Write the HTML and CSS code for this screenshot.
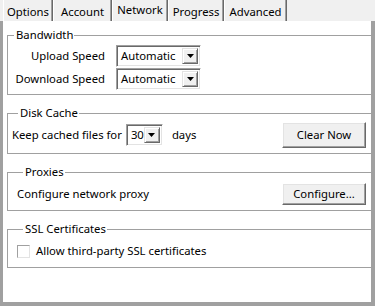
FILE: index.html
```html
<!DOCTYPE html>
<html>
<head>
<meta charset="utf-8">
<link rel="stylesheet" href="styles.css">
</head>
<body>
<div class="window">
  <div class="tabs">
    <div class="tab tab-options">Options</div>
    <div class="tab tab-account">Account</div>
    <div class="tab tab-network active">Network</div>
    <div class="tab tab-progress">Progress</div>
    <div class="tab tab-advanced">Advanced</div>
  </div>
  <div class="panel">
    <fieldset class="group bandwidth">
      <legend>Bandwidth</legend>
      <div class="speed-grid">
        <label class="speed-label">Upload Speed</label>
        <div class="combo combo-wide"><span class="combo-value">Automatic</span><span class="combo-btn"><svg width="7" height="4" viewBox="0 0 7 4"><path d="M0 0h7L3.5 4z" fill="#000"/></svg></span></div>
        <label class="speed-label">Download Speed</label>
        <div class="combo combo-wide"><span class="combo-value">Automatic</span><span class="combo-btn"><svg width="7" height="4" viewBox="0 0 7 4"><path d="M0 0h7L3.5 4z" fill="#000"/></svg></span></div>
      </div>
    </fieldset>
    <fieldset class="group disk">
      <legend>Disk Cache</legend>
      <div class="row">
        <span>Keep cached files for</span>
        <div class="combo combo-small"><span class="combo-value">30</span><span class="combo-btn"><svg width="7" height="4" viewBox="0 0 7 4"><path d="M0 0h7L3.5 4z" fill="#000"/></svg></span></div>
        <span class="days">days</span>
        <button class="btn btn-tall">Clear Now</button>
      </div>
    </fieldset>
    <fieldset class="group proxies">
      <legend>Proxies</legend>
      <div class="row">
        <span>Configure network proxy</span>
        <button class="btn">Configure...</button>
      </div>
    </fieldset>
    <fieldset class="group ssl">
      <legend>SSL Certificates</legend>
      <label class="check-row"><span class="checkbox"></span><span>Allow third-party SSL certificates</span></label>
    </fieldset>
  </div>
</div>
</body>
</html>
```
FILE: styles.css
```css
* { box-sizing: border-box; }
html, body { margin: 0; padding: 0; }
body {
  width: 375px;
  height: 306px;
  background: #f0f0f0;
  font-family: "Noto Sans", "Open Sans", sans-serif;
  font-size: 11.3px;
  line-height: 16px;
  color: #000;
  overflow: hidden;
}
.window {
  display: flex;
  flex-direction: column;
  height: 306px;
}
.tabs {
  display: flex;
  height: 21px;
  padding-left: 3px;
  background: #f0f0f0;
  align-items: stretch;
}
.tab {
  display: flex;
  justify-content: center;
  padding-top: 4px;
  border-left: 1px solid #fff;
  border-right: 1px solid #696969;
  box-shadow: inset -1px 0 0 #a0a0a0;
  white-space: nowrap;
}
.tab-options { width: 50px; }
.tab-account { width: 59px; }
.tab-network { width: 56px; }
.tab-progress { width: 56px; }
.tab-advanced { width: 63px; }
.tab.active {
  padding-top: 2px;
}
.panel {
  flex: 1;
  background: #fff;
  border-left: 3px solid #a0a0a0;
  border-right: 4px solid #a0a0a0;
  border-bottom: 4px solid #a0a0a0;
  padding: 6px 0 0 4px;
  display: flex;
  flex-direction: column;
  gap: 10px;
}
.group {
  margin: 0;
  border: 1px solid #a0a0a0;
  border-right: none;
  padding: 0;
  min-width: 0;
}
.group legend {
  margin-left: 6px;
  padding: 0 1px 0 2px;
  line-height: 16px;
}
.bandwidth { padding: 2px 0 4px 0; }
.disk { padding: 1px 5px 5px 4px; }
.proxies { padding: 3px 5px 5px 9px; }
.ssl { padding: 6px 0 8px 9px; }

.speed-grid {
  display: grid;
  grid-template-columns: 97px 85px;
  grid-auto-rows: 22px;
  column-gap: 11px;
  row-gap: 1px;
  align-items: center;
}
.speed-label { text-align: right; }

.combo {
  display: flex;
  align-items: stretch;
  height: 22px;
  border-top: 1px solid #a0a0a0;
  border-left: 1px solid #a0a0a0;
  border-bottom: 1px solid #fff;
  border-right: 1px solid #fff;
  box-shadow: inset 1px 1px 0 #696969, inset -1px -1px 0 #e3e3e3;
  padding: 2px;
  background: #fff;
}
.combo-wide { width: 85px; }
.combo-small { width: 37px; margin-left: 4px; }
.combo-value {
  flex: 1;
  padding-left: 2px;
  line-height: 16px;
}
.combo-btn {
  width: 16px;
  display: flex;
  align-items: center;
  justify-content: center;
  background: #f0f0f0;
  border-top: 1px solid #e3e3e3;
  border-left: 1px solid #e3e3e3;
  border-right: 1px solid #696969;
  border-bottom: 1px solid #696969;
  box-shadow: inset 1px 1px 0 #fff, inset -1px -1px 0 #a0a0a0;
}

.row {
  display: flex;
  align-items: center;
}
.days { margin-left: 9px; }
.btn {
  margin-left: auto;
  width: 84px;
  height: 22px;
  font: inherit;
  color: #000;
  background: #f0f0f0;
  border-top: 1px solid #fff;
  border-left: 1px solid #fff;
  border-right: 1px solid #696969;
  border-bottom: 1px solid #696969;
  box-shadow: inset -1px -1px 0 #a0a0a0, inset 1px 1px 0 #e3e3e3;
  padding: 0;
}
.btn-tall { height: 26px; }

.check-row {
  display: flex;
  align-items: center;
  gap: 6px;
  height: 16px;
}
.checkbox {
  width: 13px;
  height: 13px;
  border-top: 1px solid #a0a0a0;
  border-left: 1px solid #a0a0a0;
  border-right: 1px solid #e3e3e3;
  border-bottom: 1px solid #e3e3e3;
  background: #fff;
}
```
